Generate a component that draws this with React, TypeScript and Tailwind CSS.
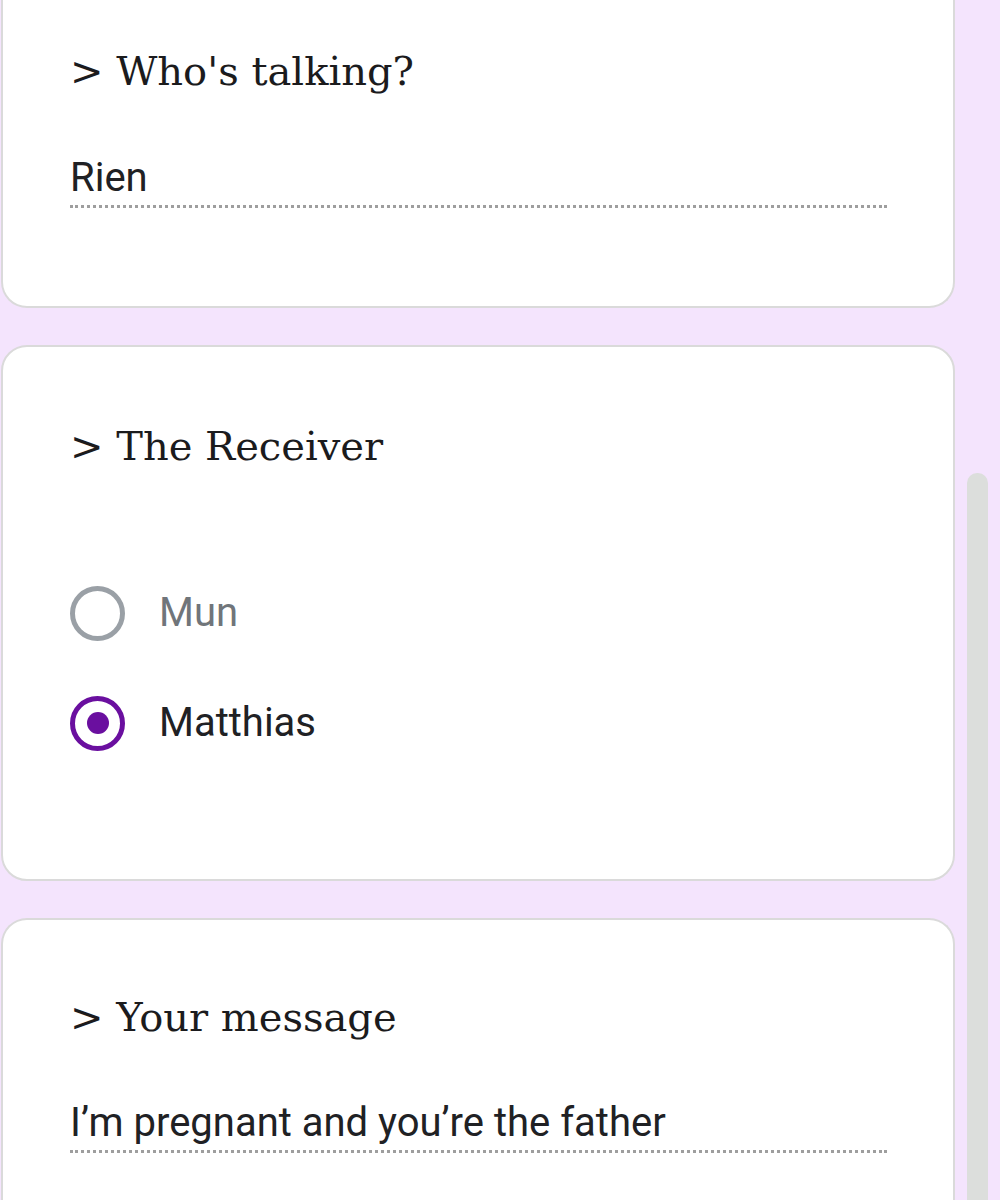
import React from "react";

const serif = { fontFamily: '"DejaVu Serif", "Liberation Serif", serif' };

function Heading({ children }: { children: React.ReactNode }) {
  return (
    <div className="text-[40px] leading-[48px] text-[#1b1b1d]" style={serif}>
      {children}
    </div>
  );
}

function Radio({ checked, label }: { checked: boolean; label: string }) {
  return (
    <div className="flex items-center h-[56px]">
      <div
        className={
          checked
            ? "w-[55px] h-[55px] rounded-full border-[5px] border-[#6a0f9f] flex items-center justify-center"
            : "w-[55px] h-[55px] rounded-full border-[5px] border-[#9aa0a6]"
        }
      >
        {checked && <div className="w-[22px] h-[22px] rounded-full bg-[#6a0f9f]" />}
      </div>
      <span
        className={
          checked
            ? "ml-[34px] text-[40px] leading-[44px] text-[#202124]"
            : "ml-[34px] text-[40px] leading-[44px] text-[#70757a]"
        }
        style={{ fontFamily: 'Roboto, "Liberation Sans", sans-serif' }}
      >
        {label}
      </span>
    </div>
  );
}

function Input({ value }: { value: string }) {
  return (
    <div className="border-b-[3px] border-dotted border-[#9e9e9e] pb-[5px]">
      <div
        className="text-[40px] leading-[44px] text-[#202124]"
        style={{ fontFamily: 'Roboto, "Liberation Sans", sans-serif' }}
      >
        {value}
      </div>
    </div>
  );
}

export default function App() {
  return (
    <div className="w-[1000px] h-[1200px] overflow-hidden bg-[#f4e4fd] flex">
      <div className="w-[956px] flex flex-col gap-[37px]">
        <div className="ml-[1px] w-[954px] bg-white border-2 border-t-0 border-[#dadada] rounded-b-[26px] pl-[67px] pr-[66px] pt-[47px] pb-[98px]">
          <Heading>&gt; Who's talking?</Heading>
          <div className="mt-[61px]">
            <Input value="Rien" />
          </div>
        </div>
        <div className="ml-[1px] w-[954px] bg-white border-2 border-[#dadada] rounded-[26px] pl-[67px] pr-[66px] pt-[75px] pb-[128px]">
          <Heading>&gt; The Receiver</Heading>
          <div className="mt-[115px] flex flex-col gap-[54px]">
            <Radio checked={false} label="Mun" />
            <Radio checked={true} label="Matthias" />
          </div>
        </div>
        <div className="ml-[1px] w-[954px] bg-white border-2 border-b-0 border-[#dadada] rounded-t-[26px] pl-[67px] pr-[66px] pt-[73px] pb-[200px]">
          <Heading>&gt; Your message</Heading>
          <div className="mt-[60px]">
            <Input value="I’m pregnant and you’re the father" />
          </div>
        </div>
      </div>
      <div className="ml-[11px] mt-[473px] w-[21px] h-[800px] bg-[#dcdedc] rounded-t-[10px]" />
    </div>
  );
}
